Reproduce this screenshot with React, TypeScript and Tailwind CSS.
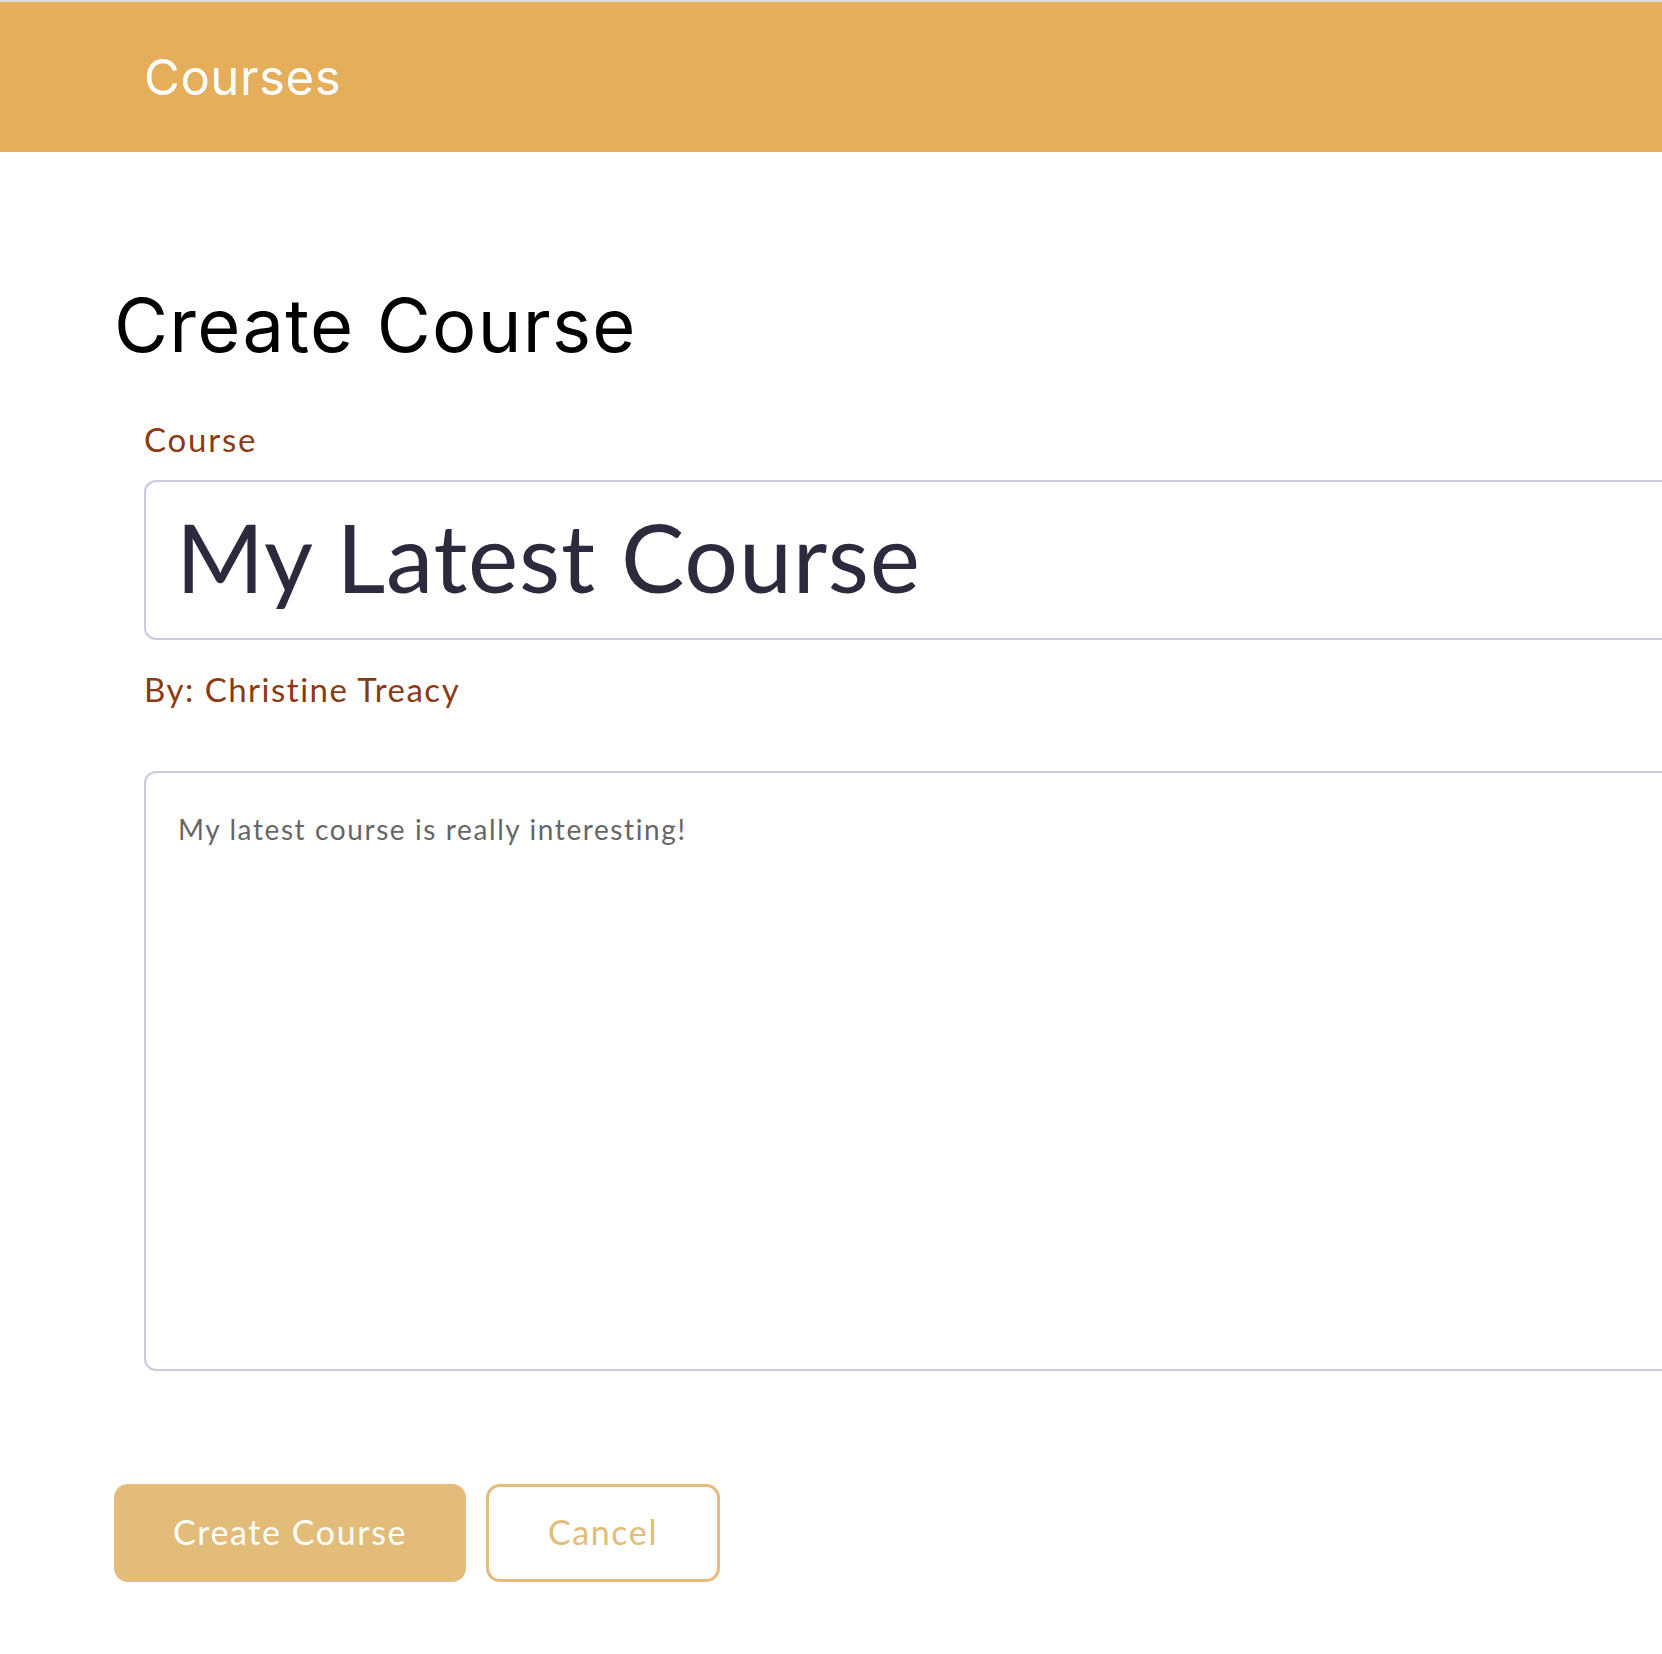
import React from "react";

export default function App() {
  const poppins = "font-['Inter',sans-serif]";
  const quest = "font-['Lato',sans-serif]";
  return (
    <div className="min-h-screen w-full overflow-hidden bg-white">
      <div className="h-[2px] bg-[#dcdcdc]" />
      <header className="flex h-[150px] items-center bg-[#e5ae5a] pl-[144px]">
        <h1 className={`${poppins} text-[49px] leading-none font-normal tracking-[0.6px] text-white`}>Courses</h1>
      </header>
      <main className="pl-[114px]">
        <h2 className={`${poppins} mt-[136px] text-[74px] leading-none font-normal tracking-[1.3px] text-black`}>
          Create Course
        </h2>
        <div className="pl-[30px]">
          <label className={`${quest} mt-[61px] block text-[33px] leading-none tracking-[1.8px] text-[#8b3a14]`}>Course</label>
          <div className="mt-[24px] flex h-[160px] w-[1600px] items-start rounded-[12px] border-2 border-[#cdc8dc] pl-[30px] pt-[17px]">
            <span className={`${quest} text-[95px] leading-[1.2] tracking-[0.8px] text-[#2e2a3e]`}>My Latest Course</span>
          </div>
          <div className={`${quest} mt-[33px] text-[33px] leading-none tracking-[1.5px] text-[#8b3a14]`}>By: Christine Treacy</div>
          <div className="mt-[65px] h-[600px] w-[1600px] rounded-[12px] border-2 border-[#cdc8dc] pl-[32px] pt-[42px]">
            <span className={`${quest} text-[28px] leading-none tracking-[1.6px] text-[#666666]`}>
              My latest course is really interesting!
            </span>
          </div>
        </div>
        <div className="mt-[113px] flex gap-[20px]">
          <button className={`${quest} h-[98px] w-[352px] rounded-[14px] bg-[#e4bc7a] pb-[4px] text-[34px] tracking-[1.6px] text-white`}>
            Create Course
          </button>
          <button className={`${quest} h-[98px] w-[234px] rounded-[14px] border-[3px] border-[#e4bc7a] bg-white pb-[4px] text-[34px] tracking-[1.6px] text-[#e4bc7a]`}>
            Cancel
          </button>
        </div>
      </main>
    </div>
  );
}
